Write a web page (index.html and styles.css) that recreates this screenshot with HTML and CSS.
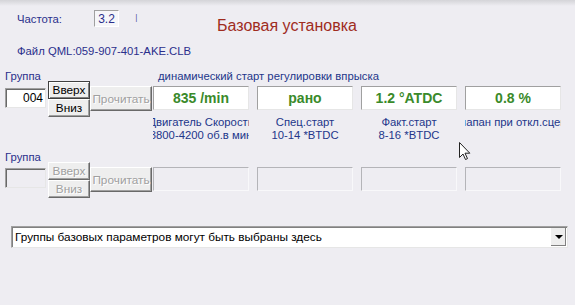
FILE: index.html
```html
<!DOCTYPE html>
<html lang="ru">
<head>
  <meta charset="UTF-8">
  <title>Базовая установка</title>
  <link rel="stylesheet" href="styles.css">
</head>
<body>
  <div class="head">
    <div class="info">
      <div class="freq">
        <span class="freq-label">Частота:</span>
        <span class="freq-value">3.2</span>
        <span class="freq-mark">I</span>
      </div>
      <div class="file">Файл QML:059-907-401-AKE.CLB</div>
    </div>
    <h1 class="title">Базовая установка</h1>
  </div>

  <!-- группа 1 -->
  <div class="group">
    <div class="group-head">
      <span class="group-label">Группа</span>
      <span class="group-name">динамический старт регулировки впрыска</span>
    </div>
    <div class="group-row">
      <div class="group-num">004</div>
      <div class="updown">
        <button class="btn btn-default">Вверх</button>
        <button class="btn">Вниз</button>
      </div>
      <button class="btn btn-read" disabled>Прочитать</button>
      <div class="cells">
        <div class="cell">
          <div class="value">835 /min</div>
          <div class="caption"><span>Двигатель Скорость</span></div>
          <div class="caption"><span>3800-4200 об.в мин</span></div>
        </div>
        <div class="cell">
          <div class="value">рано</div>
          <div class="caption"><span>Спец.старт</span></div>
          <div class="caption"><span>10-14 *BTDC</span></div>
        </div>
        <div class="cell">
          <div class="value">1.2 °ATDC</div>
          <div class="caption"><span>Факт.старт</span></div>
          <div class="caption"><span>8-16 *BTDC</span></div>
        </div>
        <div class="cell">
          <div class="value">0.8 %</div>
          <div class="caption"><span>Клапан при откл.сцепл</span></div>
        </div>
      </div>
    </div>
  </div>

  <!-- группа 2 (пустая) -->
  <div class="group group-empty">
    <div class="group-head">
      <span class="group-label">Группа</span>
    </div>
    <div class="group-row">
      <div class="group-num"></div>
      <div class="updown">
        <button class="btn" disabled>Вверх</button>
        <button class="btn" disabled>Вниз</button>
      </div>
      <button class="btn btn-read" disabled>Прочитать</button>
      <div class="cells">
        <div class="cell"><div class="value"></div></div>
        <div class="cell"><div class="value"></div></div>
        <div class="cell"><div class="value"></div></div>
        <div class="cell"><div class="value"></div></div>
      </div>
    </div>
  </div>

  <div class="select">
    <span class="select-text">Группы базовых параметров могут быть выбраны здесь</span>
    <span class="select-arrow"></span>
  </div>

  <svg class="cursor" width="12" height="19" viewBox="0 0 12 19">
    <path d="M0.5 0.5 L0.5 15.5 L4 12 L6.5 17.5 L8.5 16.6 L6 11.2 L10.8 11.2 Z" fill="#fff" stroke="#222" stroke-width="1"/>
  </svg>
</body>
</html>
```

FILE: styles.css
```css
body {
  margin: 0;
  width: 575px;
  height: 305px;
  overflow: hidden;
  position: relative;
  font-family: 'Liberation Sans', Arial, sans-serif;
  font-size: 11.3px;
  color: #000;
  background: linear-gradient(#d4d4d8, #eeedf2 6px) #eeedf2;
}

.head {
  display: flex;
  padding: 10px 0 0 17px;
}

.info {
  width: 200px;
}

.freq {
  display: flex;
  align-items: center;
  height: 17px;
  color: #2b2f8c;
}

.freq-label {
  width: 77px;
}

.freq-value {
  width: 23px;
  height: 15px;
  line-height: 16px;
  font-size: 12px;
  text-align: center;
  background: #f6f6f9;
  border: 1px solid;
  border-color: #a0a0a0 #ffffff #ffffff #a0a0a0;
}

.freq-mark {
  margin-left: 16px;
  font-size: 10px;
  transform: scaleX(0.6);
}

.file {
  margin-top: 17px;
  line-height: 14px;
  color: #2b2f8c;
}

.title {
  margin: 6px 0 0 0;
  font-size: 16px;
  font-weight: normal;
  line-height: 19px;
  color: #9f2c1e;
}

.group {
  margin-top: 12px;
  padding-left: 5px;
}

.group-empty {
  margin-top: 9px;
}

.group-head {
  display: flex;
  line-height: 12px;
  height: 12px;
  color: #2b2f8c;
}

.group-label {
  width: 153px;
}

.group-name {
  color: #23368a;
}

.group-row {
  display: flex;
  align-items: flex-start;
  margin-top: -1px;
}

.group-num {
  margin-top: 7px;
  width: 37px;
  height: 18px;
  line-height: 18px;
  padding-right: 2px;
  font-size: 12px;
  text-align: right;
  background: #fff;
  border: 1px solid;
  border-color: #a0a0a0 #e6e6e6 #e6e6e6 #a0a0a0;
  box-shadow: inset 1px 1px 0 #696969;
}

.group-empty .group-num {
  background: transparent;
  margin-top: 6px;
}

.updown {
  display: flex;
  flex-direction: column;
  margin-left: 2px;
}

.btn {
  font-family: 'Liberation Sans', Arial, sans-serif;
  font-size: 11.8px;
  padding: 0;
  width: 42px;
  height: 18px;
  color: #000;
  background: #eeeeee;
  border: 1px solid;
  border-color: #ffffff #696969 #696969 #ffffff;
  box-shadow: inset -1px -1px 0 #a0a0a0;
}

.btn:disabled {
  color: #a0a0a0;
  text-shadow: 1px 1px 0 #ffffff;
}

.btn-default {
  border-color: #404040;
  box-shadow: inset 1px 1px 0 #ffffff, inset -1px -1px 0 #808080;
}

.btn-read {
  width: 62px;
  height: 25px;
  margin-top: 5px;
}

.cells {
  display: flex;
  gap: 8px;
  margin: 5px 0 0 1px;
}

.cell {
  width: 96px;
}

.value {
  height: 22px;
  line-height: 23px;
  text-align: center;
  font-size: 14px;
  font-weight: bold;
  color: #3a8a2a;
  background: #fff;
  border: 1px solid;
  border-color: #a0a0a0 #e6e6e6 #e6e6e6 #a0a0a0;
}

.group-empty .value {
  background: transparent;
  border-color: #b4b4b8 #f8f8fa #f8f8fa #b4b4b8;
}

.caption {
  display: flex;
  justify-content: center;
  overflow: hidden;
  white-space: nowrap;
  line-height: 13px;
  color: #23368a;
}

.value + .caption {
  margin-top: 6px;
}

.caption span {
  flex-shrink: 0;
}

.select {
  display: flex;
  align-items: center;
  margin: 28px 0 0 11px;
  width: 555px;
  height: 20px;
  font-size: 11.8px;
  background: #fff;
  border: 1px solid;
  border-color: #a0a0a0 #e6e6e6 #e6e6e6 #a0a0a0;
  box-shadow: inset 1px 1px 0 #808080;
}

.select-text {
  flex: 1;
  padding-left: 3px;
}

.select-arrow {
  width: 15px;
  height: 18px;
  margin-right: 1px;
  background: #eeeeee;
  border-left: 1px solid #ffffff;
  box-shadow: inset -1px -1px 0 #808080;
  position: relative;
}

.select-arrow::after {
  content: "";
  position: absolute;
  left: 4px;
  top: 7px;
  border-left: 4px solid transparent;
  border-right: 4px solid transparent;
  border-top: 4px solid #000;
}

.cursor {
  position: absolute;
  left: 459px;
  top: 142px;
}
```
